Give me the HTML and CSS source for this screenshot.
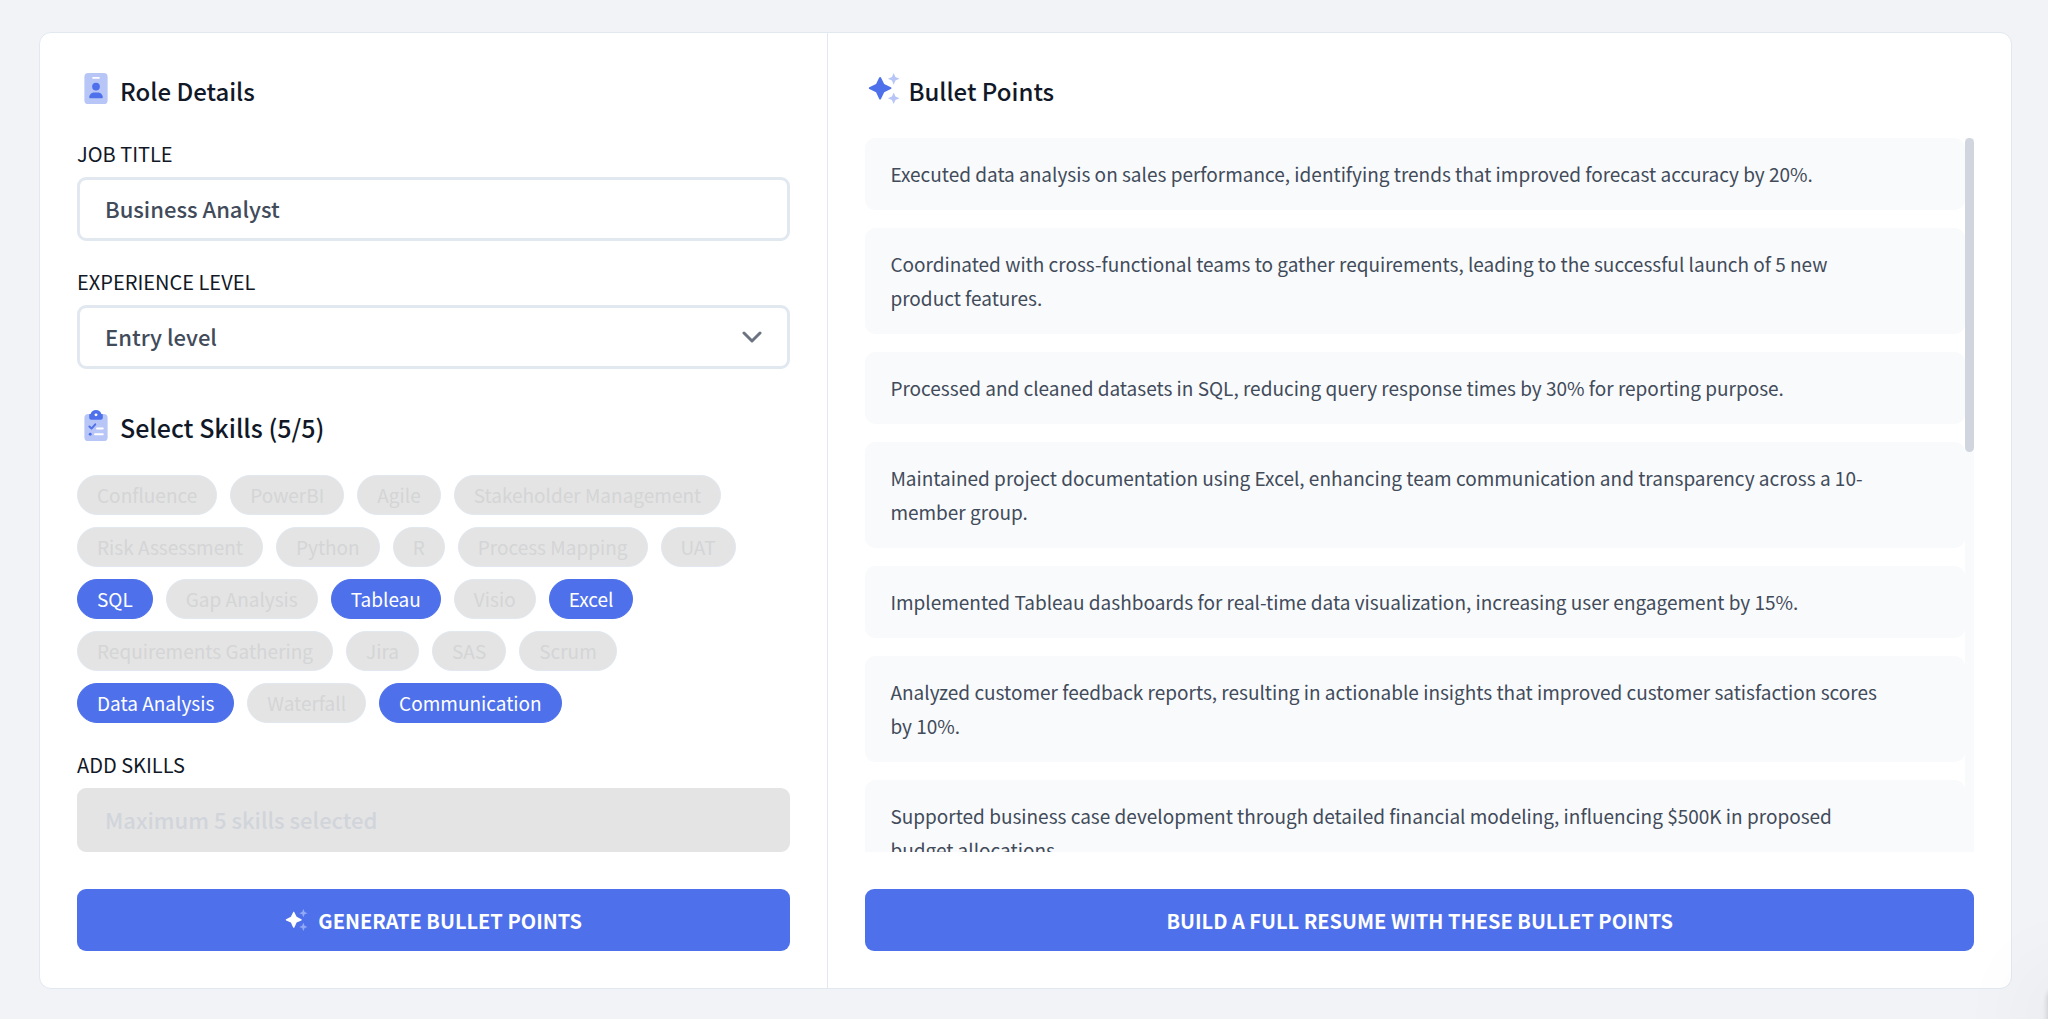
FILE: index.html
```html
<!DOCTYPE html>
<html lang="en">

<head>
    <meta charset="UTF-8">
    <meta name="viewport" content="width=device-width, initial-scale=1.0">
    <title>Resume Bullet Point Generator</title>

    <link rel="stylesheet" href="styles.css">
</head>

<body>
    <svg class="sprite" aria-hidden="true">
        <symbol id="sparkles" viewBox="0 0 512 512">
            <path class="main" d="M192 64c6 0 12 3 14 9l53 110 110 53c6 3 10 8 10 14s-4 12-10 15l-110 52-53 111c-2 5-8 9-14 9s-12-4-15-9l-52-111-111-52c-5-3-9-9-9-15s4-11 9-14l111-53L177 73c3-6 9-9 15-9z" />
            <path class="faded" d="M416 0l29 67 67 29-67 29-29 67-29-67-67-29 67-29zM416 320l29 67 67 29-67 29-29 67-29-67-67-29 67-29z" />
        </symbol>
    </svg>
    <main class="card">
        <form class="panel role" id="roleForm">
            <h2>
                <svg class="icon" viewBox="0 0 384 512" aria-hidden="true">
                    <rect class="faded" width="384" height="512" rx="64" />
                    <rect class="hole" x="128" y="64" width="128" height="32" rx="16" />
                    <circle class="main" cx="192" cy="224" r="64" />
                    <path class="main" d="M80 400c0-44 36-80 80-80h64c44 0 80 36 80 80 0 9-7 16-16 16H96c-9 0-16-7-16-16z" />
                </svg>
                Role Details
            </h2>
            <div class="field">
                <label for="jobTitle">JOB TITLE</label>
                <input type="text" id="jobTitle" value="Business Analyst">
            </div>
            <div class="field">
                <label for="level">EXPERIENCE LEVEL</label>
                <div class="select-box">
                    <select id="level">
                        <option>Entry level</option>
                        <option>Mid level</option>
                        <option>Senior level</option>
                    </select>
                    <svg class="chevron" viewBox="0 0 20 12" aria-hidden="true">
                        <path d="M2 2l8 8 8-8" />
                    </svg>
                </div>
            </div>
            <h2 class="skills-title">
                <svg class="icon" viewBox="0 0 384 512" aria-hidden="true">
                    <rect class="faded" y="64" width="384" height="448" rx="64" />
                    <path class="main" d="M192 0c-42 0-77 27-90 64h-6c-9 0-16 7-16 16v48c0 18 14 32 32 32h160c18 0 32-14 32-32V80c0-9-7-16-16-16h-6C269 27 234 0 192 0z" />
                    <circle class="hole" cx="192" cy="80" r="24" />
                    <path class="tick" d="M82 272l36 34 62-70" />
                    <circle class="main" cx="96" cy="400" r="24" />
                    <rect class="hole" x="192" y="288" width="128" height="32" rx="16" />
                    <rect class="hole" x="160" y="384" width="160" height="32" rx="16" />
                </svg>
                Select Skills (5/5)
            </h2>
            <div class="skills">
                <button type="button" disabled>Confluence</button>
                <button type="button" disabled>PowerBI</button>
                <button type="button" disabled>Agile</button>
                <button type="button" disabled>Stakeholder Management</button>
                <button type="button" disabled>Risk Assessment</button>
                <button type="button" disabled>Python</button>
                <button type="button" disabled>R</button>
                <button type="button" disabled>Process Mapping</button>
                <button type="button" disabled>UAT</button>
                <button type="button" class="selected">SQL</button>
                <button type="button" disabled>Gap Analysis</button>
                <button type="button" class="selected">Tableau</button>
                <button type="button" disabled>Visio</button>
                <button type="button" class="selected">Excel</button>
                <button type="button" disabled>Requirements Gathering</button>
                <button type="button" disabled>Jira</button>
                <button type="button" disabled>SAS</button>
                <button type="button" disabled>Scrum</button>
                <button type="button" class="selected">Data Analysis</button>
                <button type="button" disabled>Waterfall</button>
                <button type="button" class="selected">Communication</button>
            </div>
            <div class="field">
                <label for="addSkills">ADD SKILLS</label>
                <input type="text" id="addSkills" placeholder="Maximum 5 skills selected" disabled>
            </div>
            <button type="button" class="action">
                <svg class="button-icon" aria-hidden="true"><use href="#sparkles" /></svg>
                GENERATE BULLET POINTS
            </button>
        </form>
        <section class="panel results">
            <h2>
                <svg class="icon" aria-hidden="true"><use href="#sparkles" /></svg>
                Bullet Points
            </h2>
            <div class="bullets-area">
                <ul class="bullets">
                    <li>Executed data analysis on sales performance, identifying trends that improved forecast accuracy by 20%.</li>
                    <li>Coordinated with cross-functional teams to gather requirements, leading to the successful launch of 5 new product features.</li>
                    <li>Processed and cleaned datasets in SQL, reducing query response times by 30% for reporting purpose.</li>
                    <li>Maintained project documentation using Excel, enhancing team communication and transparency across a 10-member group.</li>
                    <li>Implemented Tableau dashboards for real-time data visualization, increasing user engagement by 15%.</li>
                    <li>Analyzed customer feedback reports, resulting in actionable insights that improved customer satisfaction scores by 10%.</li>
                    <li>Supported business case development through detailed financial modeling, influencing $500K in proposed budget allocations.</li>
                </ul>
                <div class="scrollbar">
                    <div class="thumb"></div>
                </div>
            </div>
            <button type="button" class="action">BUILD A FULL RESUME WITH THESE BULLET POINTS</button>
        </section>
    </main>
    <div class="corner-shadow"></div>
</body>

</html>
```
FILE: styles.css
```css
* {
    box-sizing: border-box;
}

body {
    margin: 0;
    padding: 32px 36px 30px 39px;
    background: #f2f3f7;
    color: #111827;
    font-family: "Noto Sans CJK SC", "Noto Sans", sans-serif;
    font-size: 20px;
}

button,
input,
select {
    font-family: inherit;
}

.sprite {
    position: absolute;
    width: 0;
    height: 0;
}

.card {
    display: grid;
    grid-template-columns: 2fr 3fr;
    background: white;
    border: 1px solid #e1e8f0;
    border-radius: 12px;
}

.panel {
    display: flex;
    flex-direction: column;
    min-width: 0;
    padding: 39px 37px 37px;
}

.role {
    border-right: 1px solid #e1e8f0;
}

/* Headings */

h2 {
    display: flex;
    gap: 5px;
    height: 38px;
    margin: 0 0 28px;
    font-size: 24px;
    font-weight: 500;
    line-height: 37px;
}

.icon {
    width: 38px;
    height: 31px;
    margin-top: 1px;
}

.main {
    fill: var(--main, #4e71eb);
}

.faded {
    fill: var(--faded, #b8c6f7);
}

.hole {
    fill: white;
}

.tick {
    fill: none;
    stroke: #4e71eb;
    stroke-width: 32;
    stroke-linecap: round;
    stroke-linejoin: round;
}

.skills-title {
    margin-top: 15px;
    font-size: 25px;
}

/* Fields */

.field {
    display: flex;
    flex-direction: column;
    gap: 7px;
    margin-bottom: 25px;
}

label {
    line-height: 32px;
}

input,
select {
    width: 100%;
    height: 64px;
    padding: 0 25px 2px;
    background: white;
    color: #414b5a;
    border: 3px solid #e1e8f0;
    border-radius: 9px;
    font-size: 22px;
    font-weight: 500;
    appearance: none;
}

input:disabled {
    background: #e4e4e4;
    border-color: #e4e4e4;
}

input::placeholder {
    color: #d1d5db;
}

.select-box {
    position: relative;
}

.chevron {
    position: absolute;
    top: 26px;
    right: 28px;
    width: 20px;
    height: 12px;
    fill: none;
    stroke: #6b7280;
    stroke-width: 3;
    stroke-linecap: round;
    stroke-linejoin: round;
    pointer-events: none;
}

/* Skills */

.skills {
    display: flex;
    flex-wrap: wrap;
    gap: 12px 13px;
    margin-bottom: 26px;
    padding-right: 20px;
}

.skills button {
    height: 40px;
    padding: 0 19px;
    background: #e4e4e4;
    color: #d4d5d6;
    border: 1px solid #e1e8f0;
    border-radius: 20px;
    font-size: 19px;
    line-height: 38px;
}

.skills .selected {
    background: #4e71eb;
    color: white;
    border-color: #4e71eb;
}

/* Bullet list */

.bullets-area {
    display: flex;
    flex: 1 1 0;
    min-height: 0;
    margin-bottom: 37px;
    overflow: hidden;
}

.bullets {
    display: flex;
    flex: 1;
    flex-direction: column;
    gap: 18px;
    margin: 0;
    padding: 0;
    overflow-y: auto;
    list-style: none;
    scrollbar-width: none;
}

.bullets li {
    flex: none;
    padding: 19px 75px 19px 25px;
    background: #f9fafc;
    color: #414b5a;
    border-radius: 10px;
    font-size: 19px;
    line-height: 34px;
}

.scrollbar {
    width: 9px;
    background: #f9fafc;
}

.thumb {
    height: 44%;
    background: #d1d5de;
    border-radius: 5px;
}

/* Buttons */

.action {
    display: flex;
    align-items: center;
    justify-content: center;
    gap: 10px;
    height: 62px;
    padding: 0 24px;
    background: #4e71eb;
    color: white;
    border: none;
    border-radius: 9px;
    font-size: 20px;
    font-weight: 700;
}

.role .action {
    margin-top: 12px;
}

.button-icon {
    width: 23px;
    height: 22px;
    --main: white;
    --faded: #93a9f3;
}

/* soft shadow in the corner of the window */
.corner-shadow {
    position: fixed;
    right: -60px;
    bottom: -30px;
    width: 60px;
    height: 60px;
    border-radius: 9px;
    box-shadow: 0 0 100px rgba(0, 0, 0, 0.12), 0 0 6px rgba(0, 0, 0, 0.2);
    pointer-events: none;
}
```
